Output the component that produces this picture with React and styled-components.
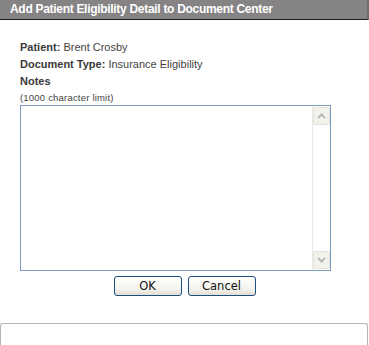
import React from 'react';
import styled, { createGlobalStyle } from 'styled-components';

const Global = createGlobalStyle`
  html, body { margin: 0; padding: 0; background: #fff; }
  body { width: 369px; height: 345px; overflow: hidden; font-family: "Liberation Sans", Arial, sans-serif; }
`;

const Dialog = styled.div`
  width: 369px;
  height: 345px;
  display: flex;
  flex-direction: column;
  background: #fff;
`;

const TitleBar = styled.div`
  height: 19px;
  background: #858384;
  border-bottom: 1px solid #1e1e1e;
  border-right: 2px solid #6f6d6e;
  color: #fff;
  font-weight: bold;
  font-size: 12px;
  line-height: 19px;
  padding-left: 10px;
  letter-spacing: -0.3px;
`;

const Body = styled.div`
  padding: 19px 0 0 20px;
  display: flex;
  flex-direction: column;
`;

const Line = styled.div`
  font-size: 11px;
  color: #444;
  height: 17px;
  line-height: 17px;
  b { font-weight: bold; color: #3a3a3a; }
`;

const Hint = styled.div`
  font-size: 9.5px;
  color: #444;
  height: 15px;
  line-height: 15px;
  letter-spacing: 0.2px;
`;

const NotesBox = styled.div`
  width: 309px;
  height: 164px;
  border: 1px solid #7a9cc0;
  display: flex;
  justify-content: flex-end;
`;

const ScrollBar = styled.div`
  width: 17px;
  border-left: 1px solid #ebeae5;
  display: flex;
  flex-direction: column;
  justify-content: space-between;
  align-items: center;
  padding: 1px 0;
`;

const ArrowBtn = styled.div`
  width: 15px;
  height: 16px;
  border: 1px solid #e4e2da;
  border-radius: 2px;
  background: #f3f2ec;
  display: flex;
  align-items: center;
  justify-content: center;
`;

const Buttons = styled.div`
  display: flex;
  justify-content: center;
  gap: 6px;
  margin-top: 5px;
  margin-left: -20px;
`;

const Button = styled.button`
  width: 68px;
  height: 20px;
  border: 1px solid #1c4f7f;
  border-radius: 3px;
  background: linear-gradient(#ffffff, #f3f2ec 70%, #e2ded0);
  font-family: "DejaVu Sans", Tahoma, sans-serif;
  font-size: 11.5px;
  color: #111;
  padding: 0;
`;

const StatusBox = styled.div`
  margin-top: auto;
  height: 21px;
  width: 366px;
  border: 1px solid #b4b4b4;
  border-bottom: none;
  border-radius: 3px 3px 0 0;
`;

const Chevron = ({ up }) => (
  <svg width="9" height="6" viewBox="0 0 9 6">
    <path d={up ? 'M1 5 L4.5 1.5 L8 5' : 'M1 1 L4.5 4.5 L8 1'} fill="none" stroke="#b9b9b4" strokeWidth="2" />
  </svg>
);

export default function App() {
  return (
    <Dialog>
      <Global />
      <TitleBar>Add Patient Eligibility Detail to Document Center</TitleBar>
      <Body>
        <Line><b>Patient:</b> Brent Crosby</Line>
        <Line><b>Document Type:</b> Insurance Eligibility</Line>
        <Line><b>Notes</b></Line>
        <Hint>(1000 character limit)</Hint>
        <NotesBox>
          <ScrollBar>
            <ArrowBtn><Chevron up /></ArrowBtn>
            <ArrowBtn><Chevron /></ArrowBtn>
          </ScrollBar>
        </NotesBox>
        <Buttons>
          <Button>OK</Button>
          <Button>Cancel</Button>
        </Buttons>
      </Body>
      <StatusBox />
    </Dialog>
  );
}
